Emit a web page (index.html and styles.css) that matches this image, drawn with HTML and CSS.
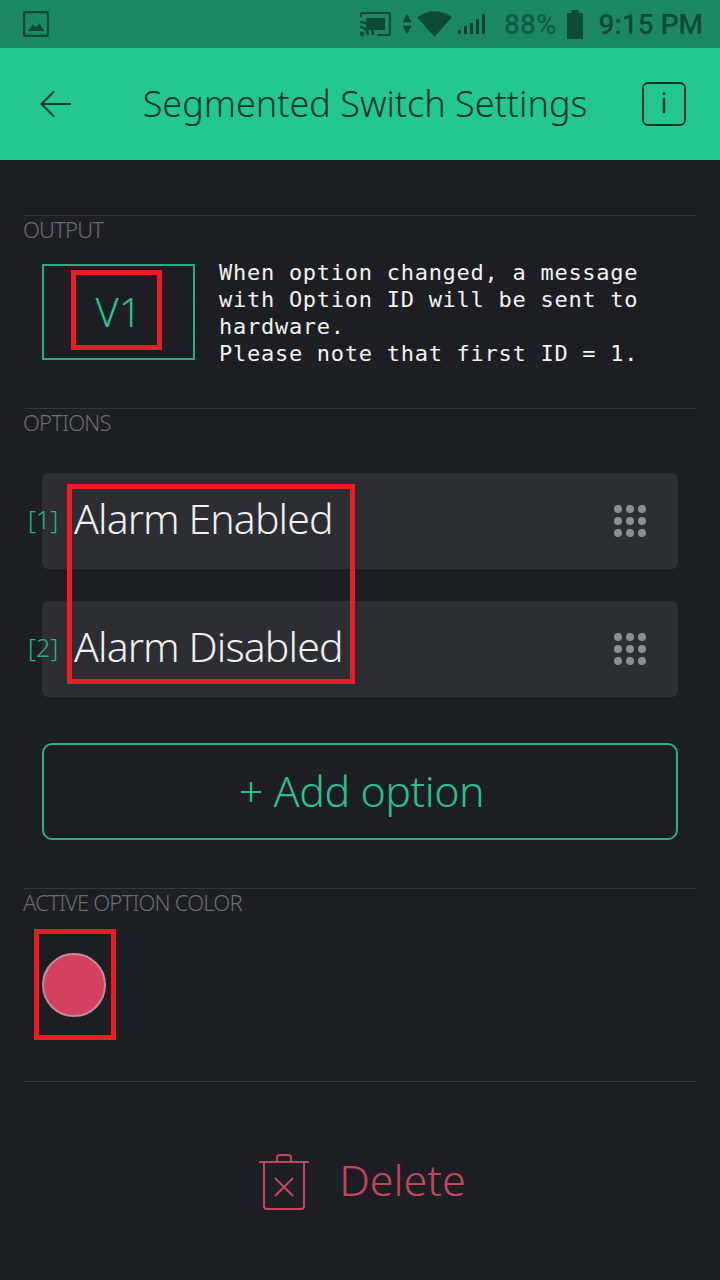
FILE: index.html
```html
<!DOCTYPE html>
<html lang="en">
<head>
  <meta charset="UTF-8" />
  <meta name="viewport" content="width=device-width, initial-scale=1" />
  <title>Segmented Switch Settings</title>
  <link rel="stylesheet" href="styles.css">
</head>
<body>

  <div class="status-bar">
    <svg class="status-pic" width="26" height="26" viewBox="0 0 26 26">
      <rect x="1" y="1" width="24" height="24" rx="2" fill="none" stroke="#0f4a36" stroke-width="2.4"/>
      <path d="M5 20 L10 13 L13 16.500 L16.500 12 L21 20 Z" fill="#0f4a36"/>
    </svg>
    <div class="status-right">
      <svg width="32" height="26" viewBox="0 0 32 26">
        <path d="M3 2 H29 a1 1 0 0 1 1 1 V23 a1 1 0 0 1 -1 1 H17" fill="none" stroke="#0f4a36" stroke-width="2"/>
        <path d="M1 6 V3 a1 1 0 0 1 1 -1 H4" fill="none" stroke="#0f4a36" stroke-width="2"/>
        <rect x="6" y="7" width="19" height="12" fill="#0f4a36"/>
        <path d="M0 11 a13 13 0 0 1 13 13 M0 16 a8 8 0 0 1 8 8" fill="none" stroke="#0f4a36" stroke-width="2.4"/>
        <circle cx="2" cy="23" r="2.400" fill="#0f4a36"/>
      </svg>
      <svg class="status-arrows" width="10" height="24" viewBox="0 0 12 24">
        <path d="M6 0 L11.500 10 H0.500 Z M0.500 14 H11.500 L6 24 Z" fill="#0f4a36"/>
      </svg>
      <svg class="status-wifi" width="35" height="28" viewBox="0 0 36 28">
        <path d="M18 27 L0 7 Q18 -5 36 7 Z" fill="#0f4a36"/>
      </svg>
      <svg class="status-signal" width="28" height="20" viewBox="0 0 28 20">
        <path d="M0 16 h3 v4 h-3 Z M6 12 h3 v8 h-3 Z M12 9 h3 v11 h-3 Z M18 5 h3 v15 h-3 Z M24 0 h3 v20 h-3 Z" fill="#0f3f2e"/>
      </svg>
      <span class="status-pct">88%</span>
      <svg class="status-batt" width="16" height="29" viewBox="0 0 16 29">
        <path d="M4.500 0 H11.500 V3 H16 V29 H0 V3 H4.500 Z" fill="#0f4a36"/>
      </svg>
      <span class="status-time">9:15 PM</span>
    </div>
  </div>

  <div class="app-bar">
    <svg class="back" width="32" height="28" viewBox="0 0 32 28">
      <path d="M31 14 H2 M14 1.500 L1.500 14 L14 26.500" fill="none" stroke="#0d3b2e" stroke-width="2"/>
    </svg>
    <h1 class="app-title">Segmented Switch Settings</h1>
    <div class="info">i</div>
  </div>

  <div class="content">
    <section class="section section-output">
      <h2 class="section-label">OUTPUT</h2>
      <div class="output-row">
        <div class="pin">V1</div>
        <p class="output-note">When option changed, a message
with Option ID will be sent to
hardware.
Please note that first ID = 1.</p>
      </div>
    </section>

    <section class="section section-options">
      <h2 class="section-label">OPTIONS</h2>
      <div class="option-list">
        <div class="option-row">
          <span class="option-id">[1]</span>
          <div class="option">
            <span class="option-name">Alarm Enabled</span>
            <div class="grip"><i></i><i></i><i></i><i></i><i></i><i></i><i></i><i></i><i></i></div>
          </div>
        </div>
        <div class="option-row">
          <span class="option-id">[2]</span>
          <div class="option">
            <span class="option-name">Alarm Disabled</span>
            <div class="grip"><i></i><i></i><i></i><i></i><i></i><i></i><i></i><i></i><i></i></div>
          </div>
        </div>
      </div>
      <div class="add-option">+ Add option</div>
    </section>

    <section class="section section-color">
      <h2 class="section-label">ACTIVE OPTION COLOR</h2>
      <div class="swatch"></div>
    </section>

    <section class="section section-delete">
      <div class="delete">
        <svg width="50" height="58" viewBox="0 0 50 58">
          <path d="M0 9 H50 M18 8 V5 a3 3 0 0 1 3 -3 H29 a3 3 0 0 1 3 3 V8 M5 9 V53 a3 3 0 0 0 3 3 H42 a3 3 0 0 0 3 -3 V9 M16 25 L34 43 M34 25 L16 43" fill="none" stroke="#c9435f" stroke-width="2"/>
        </svg>
        <span class="delete-label">Delete</span>
      </div>
    </section>
  </div>

  <!-- red markup drawn over the screenshot -->
  <div class="mark mark-pin"></div>
  <div class="mark mark-names"></div>
  <div class="mark mark-swatch"></div>

</body>
</html>
```

FILE: styles.css
```css
* {
  box-sizing: border-box;
}
body {
  position: relative;
  margin: 0;
  width: 720px;
  height: 1280px;
  overflow: hidden;
  background: #1d1e23;
  font-family: "Noto Sans", sans-serif;
}
.status-bar {
  display: flex;
  align-items: center;
  justify-content: space-between;
  height: 48px;
  padding: 0 17px 0 23px;
  background: #1b8863;
}
.status-right {
  display: flex;
  align-items: center;
}
.status-arrows {
  margin-left: 10px;
}
.status-wifi {
  margin-left: 5px;
}
.status-signal {
  margin-left: 6px;
}
.status-pct {
  margin-left: 18px;
  color: #0f5c44;
  font: 500 28px "Roboto", sans-serif;
}
.status-batt {
  margin-left: 10px;
}
.status-time {
  margin-left: 16px;
  color: #0f4a36;
  font: 500 28px "Roboto", sans-serif;
}
.app-bar {
  display: flex;
  align-items: center;
  height: 112px;
  padding: 0 34px 0 40px;
  background: #24c78f;
  color: #0b3529;
}
.app-title {
  flex: 1;
  margin: 0 0 2px 16px;
  text-align: center;
  font-size: 36px;
  font-weight: 300;
  letter-spacing: 0;
}
.info {
  width: 44px;
  height: 44px;
  border: 2px solid #0b3529;
  border-radius: 6px;
  text-align: center;
  line-height: 38px;
  font-size: 27px;
}
.content {
  padding: 55px 24px 0;
}
.section {
  border-top: 1px solid #35363b;
}
.section-label {
  margin: 0 0 0 -1px;
  color: #6a6c72;
  font-size: 22px;
  line-height: 26px;
  font-weight: 300;
  letter-spacing: -0.8px;
}
.output-row {
  display: flex;
  align-items: flex-start;
  gap: 24px;
  margin-top: 22px;
  padding-left: 18px;
  height: 144px;
}
.pin {
  width: 153px;
  height: 96px;
  border: 2px solid #2ba884;
  color: #2bc08f;
  text-align: center;
  line-height: 92px;
  font-size: 40px;
  font-weight: 300;
}
.output-note {
  margin: -5px 0 0;
  color: #f2f2f2;
  white-space: pre;
  font-family: "DejaVu Sans Mono", monospace;
  font-size: 22px;
  line-height: 27px;
  letter-spacing: 0.73px;
}
.option-list {
  display: flex;
  flex-direction: column;
  gap: 32px;
  margin-top: 38px;
}
.option-row {
  position: relative;
  padding-left: 18px;
  padding-right: 18px;
}
.option-id {
  position: absolute;
  left: 4px;
  top: 30px;
  color: #24b586;
  font-size: 25px;
  line-height: 32px;
  font-weight: 300;
}
.option {
  display: flex;
  align-items: center;
  justify-content: space-between;
  height: 96px;
  padding: 0 32px;
  background: #2d2e33;
  border-radius: 6px;
}
.option-name {
  margin-bottom: 7px;
  color: #f0f0f0;
  font-size: 41px;
  font-weight: 300;
  letter-spacing: -0.9px;
}
.grip {
  display: grid;
  grid-template-columns: repeat(3, 8px);
  gap: 4px;
}
.grip i {
  width: 8px;
  height: 8px;
  border-radius: 50%;
  background: #8e8f94;
}
.add-option {
  height: 97px;
  margin: 46px 18px 48px;
  padding-left: 3px;
  border: 2px solid #24b586;
  border-radius: 10px;
  color: #2bc08f;
  text-align: center;
  line-height: 91px;
  font-size: 43px;
  font-weight: 300;
  letter-spacing: -0.5px;
}
.section-color {
  height: 193px;
}
.swatch {
  width: 64px;
  height: 64px;
  margin: 38px 0 0 18px;
  border: 2px solid #c58a9a;
  border-radius: 50%;
  background: #d4405f;
}
.delete {
  display: flex;
  align-items: center;
  justify-content: center;
  gap: 30px;
  margin-top: 68px;
  padding-left: 5px;
}
.delete-label {
  margin-bottom: 4px;
  color: #c9435f;
  font-size: 43px;
  font-weight: 300;
}
.mark {
  position: absolute;
  border: 5px solid #ed1c24;
}
.mark-pin {
  left: 71px;
  top: 270px;
  width: 91px;
  height: 80px;
}
.mark-names {
  left: 67px;
  top: 484px;
  width: 288px;
  height: 200px;
}
.mark-swatch {
  left: 34px;
  top: 929px;
  width: 82px;
  height: 111px;
}
```
